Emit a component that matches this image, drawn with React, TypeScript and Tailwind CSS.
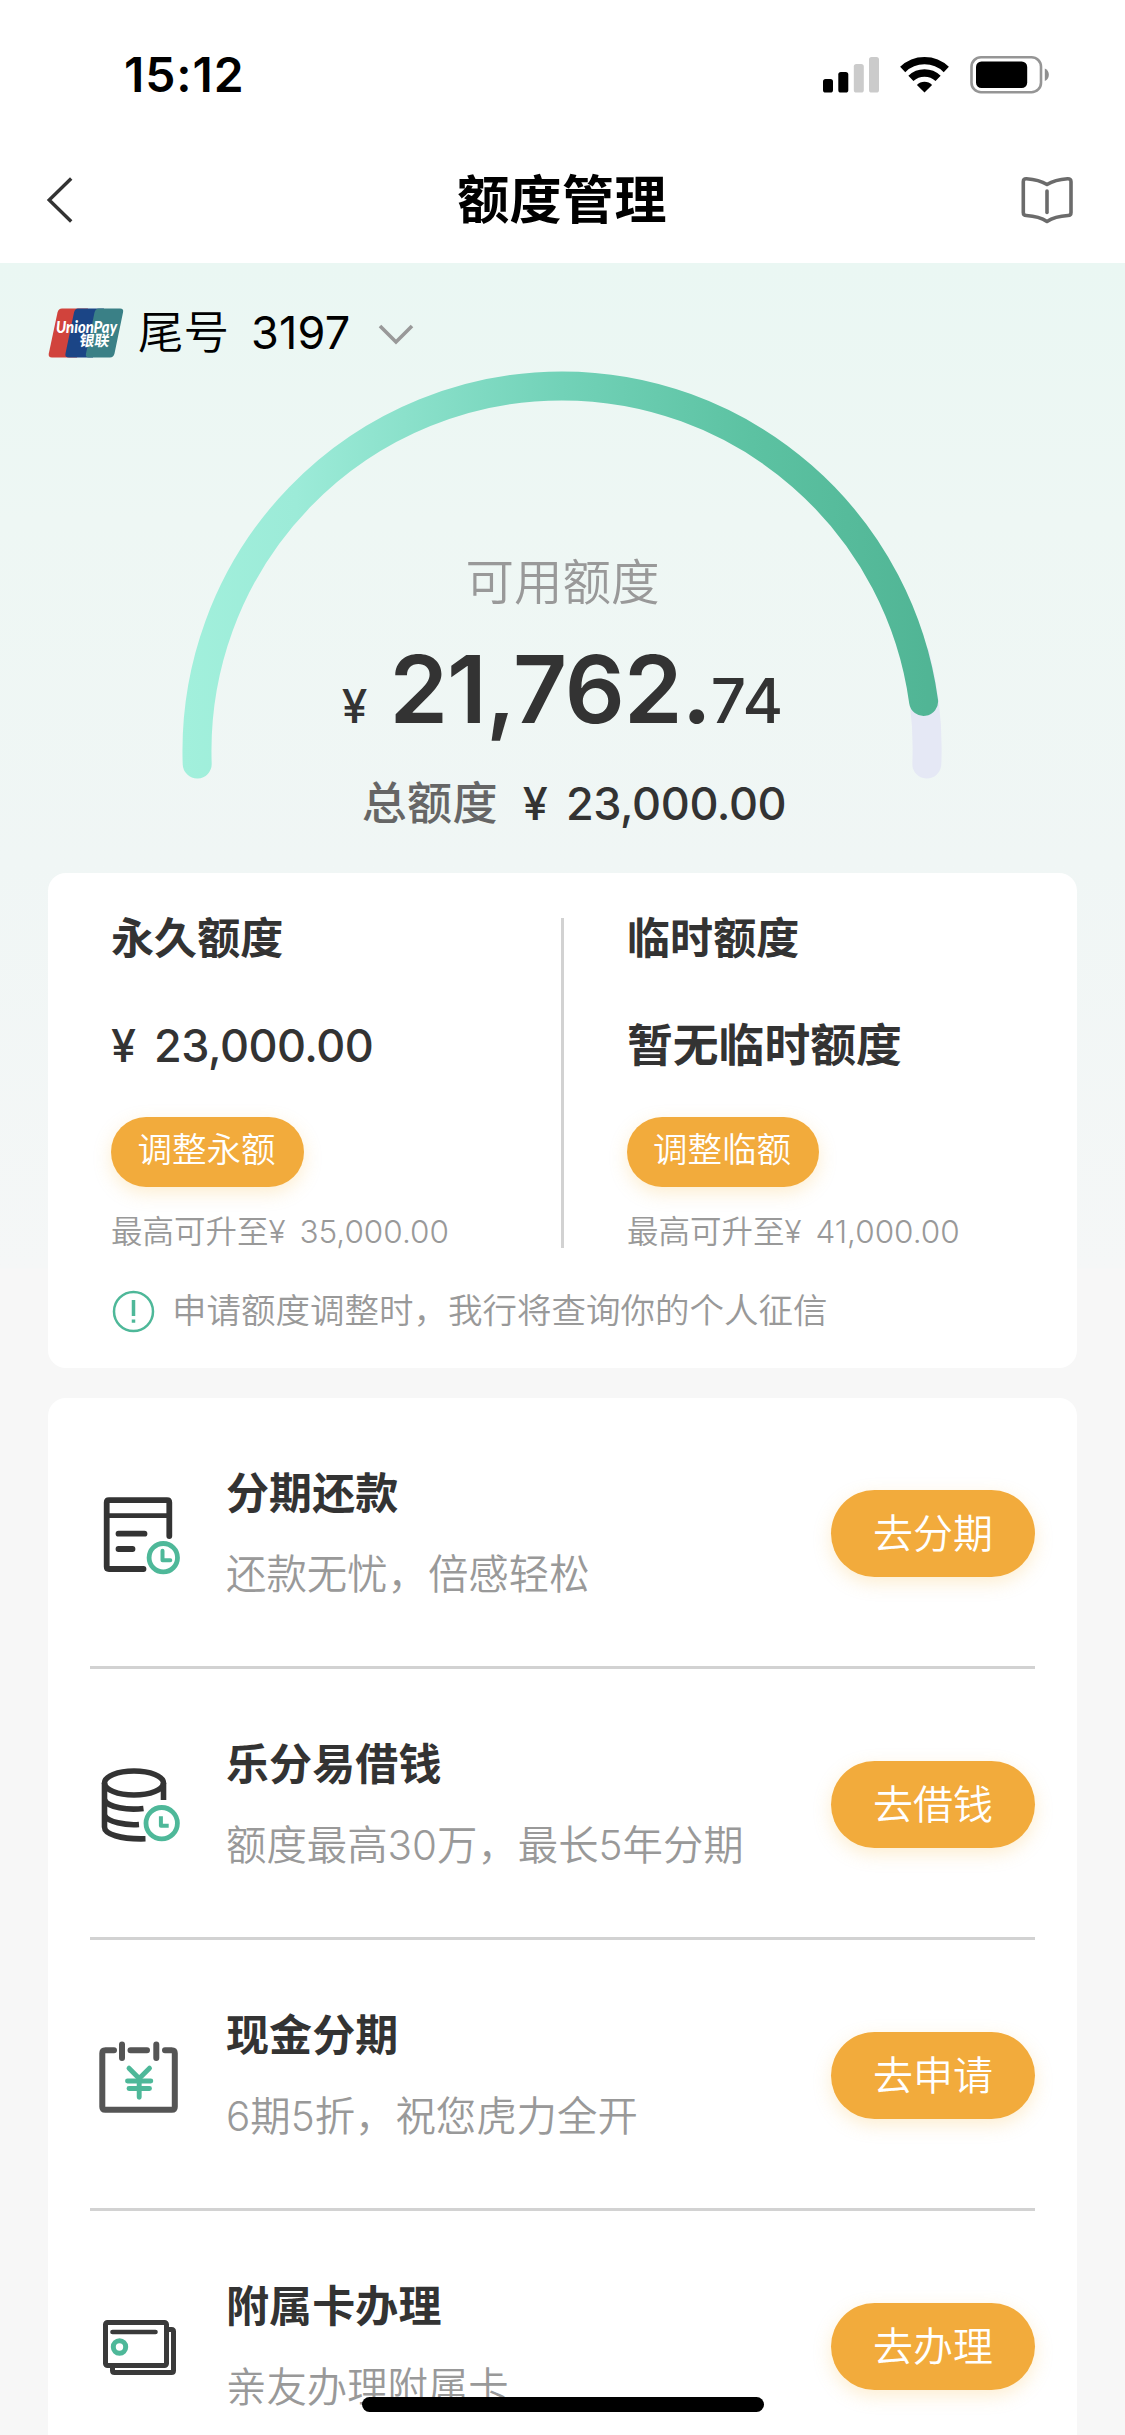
import React from "react";

const latin = "font-['Inter','Noto_Sans_CJK_SC',sans-serif]";

interface LimitProps {
  title: string;
  amount: React.ReactNode;
  action: string;
  max: string;
  btnWidth: string;
}

interface Service {
  icon: React.ReactNode;
  title: string;
  desc: string;
  action: string;
}

function StatusBar() {
  return (
    <div className="flex h-[137px] items-start justify-between pl-[124px] pr-[75px]">
      <div className="pt-[46px] text-[48px] leading-[58px] font-semibold tracking-[0.9px] text-black">
        15:12
      </div>
      <svg className="mt-[54px]" width="228" height="42" viewBox="822 54 228 42">
        <rect x="823" y="79" width="10" height="13.5" rx="2.6" fill="#000" />
        <rect x="838.3" y="72" width="10" height="20.5" rx="2.6" fill="#000" />
        <rect x="853.8" y="64" width="10" height="28.5" rx="2.6" fill="#cbcbcb" />
        <rect x="869" y="57" width="10" height="35.5" rx="2.6" fill="#cbcbcb" />
        {/* wifi */}
        <g fill="none" stroke="#000" strokeWidth="7.4">
          <path d="M902.7 69.5a31.3 31.3 0 0 1 43.600 0" />
          <path d="M910.9 78.4a19.8 19.8 0 0 1 27.200 0" />
        </g>
        <path d="M924.5 92.5l-7.600-7.500a10.800 10.800 0 0 1 15.200 0z" fill="#000" />
        {/* battery */}
        <rect x="971.500" y="57.2" width="69.500" height="35" rx="9.5" fill="none" stroke="#959595" strokeWidth="2.6" />
        <rect x="976" y="61.5" width="51.2" height="26.5" rx="5.5" fill="#000" />
        <path d="M1044.8 68.5c5.4 2 5.4 10.500 0 12.500z" fill="#8f8f8f" />
      </svg>
    </div>
  );
}

function NavBar() {
  return (
    <div className="flex h-[126px] items-center justify-between pl-[46px] pr-[52px]">
      <svg width="52" height="48" viewBox="46 176 52 48" fill="none">
        <path d="M71.200 178.500L49.200 200L71.200 221.500" stroke="#333" strokeWidth="3.4" />
      </svg>
      <h1 className="pt-[1px] pl-[5px] text-[52px] leading-[60px] font-bold tracking-[0.4px] text-black">额度管理</h1>
      <svg width="52" height="48" viewBox="1020.5 176 52 48" fill="none" stroke="#6b6b6b" strokeWidth="3.600" strokeLinecap="round" strokeLinejoin="round">
        <path d="M1046.500 184.500C1041 181 1034 179.200 1026 178.700q-3.200-.2-3.200 3V212.500q0 3 3 3C1034 216 1041 217.800 1046.500 221.500C1052 217.800 1059 216 1067.500 215.500q3 0 3-3V181.700q0-3.200-3.500-3C1059 179.200 1052 181 1046.500 184.500z" />
        <path d="M1046.500 191V212.500" />
      </svg>
    </div>
  );
}

function UnionPay() {
  return (
    <svg className="overflow-visible" width="76" height="50" viewBox="0 0 76 50">
      <path d="M14 .5H40L29 49.500H4Q0 49.500 .8 45.500L9.500 4.500Q10.500 .5 14 .5z" fill="#d1433c" />
      <path d="M30 .5H56L45 49.500H21Q16.500 49.500 17.500 45.500L26 4.500Q27 .5 30 .5z" fill="#1b4586" />
      <path d="M51 .5H72Q76 .5 75 4.500L66.500 45.500Q65.500 49.500 62 49.500H41Q37 49.500 38 45.500L46.500 4.500Q47.500 .5 51 .5z" fill="#3a8086" />
      <text x="8" y="24.500" textLength="61" lengthAdjust="spacingAndGlyphs" fontFamily="Lato, sans-serif" fontSize="16" fontWeight="900" fontStyle="italic" fill="#fff">
        UnionPay
      </text>
      <text x="31" y="38" fontFamily="'Noto Sans CJK SC', sans-serif" fontSize="15" fontWeight="700" fill="#fff" transform="skewX(-8) translate(5 0)">
        银联
      </text>
    </svg>
  );
}

function Gauge() {
  return (
    <svg className="absolute left-[182px] top-[108px]" width="762" height="410" viewBox="182 371 762 410" fill="none" strokeWidth="29" strokeLinecap="round">
      <defs>
        <linearGradient id="used" gradientUnits="userSpaceOnUse" x1="182" y1="0" x2="942" y2="0">
          <stop offset="0" stopColor="#a2f0dc" />
          <stop offset="0.15" stopColor="#9cebd8" />
          <stop offset="0.5" stopColor="#72d2b8" />
          <stop offset="0.75" stopColor="#5cc2a2" />
          <stop offset="1" stopColor="#50b494" />
        </linearGradient>
      </defs>
      <path d="M915 655A365 365 0 0 1 926.800 764" stroke="#e5e8f5" />
      <path d="M197.200 764A365 365 0 0 1 562 386A365 365 0 0 1 923.600 701.500" stroke="url(#used)" />
    </svg>
  );
}

function Limit({ title, amount, action, max, btnWidth }: LimitProps) {
  return (
    <div className="flex flex-1 flex-col items-start">
      <h2 className="text-[43px] leading-[60px] font-bold tracking-[0.1px] text-[#333]">{title}</h2>
      <div className="mt-[48px] h-[60px] text-[45px] leading-[60px] font-medium tracking-[-0.5px] whitespace-pre text-[#333] [word-spacing:7px]">
        {amount}
      </div>
      <button
        className={`mt-[41px] h-[70px] rounded-full bg-[#f2ab3c] pr-[2px] pb-[4px] text-[34.5px] font-[350] text-white shadow-[0_6px_18px_rgba(248,186,70,0.25)] ${btnWidth}`}
      >
        {action}
      </button>
      <p className="mt-[22px] text-[31.5px] leading-[46px] font-[350] whitespace-pre text-[#999] [word-spacing:5px]">
        {max}
      </p>
    </div>
  );
}

function ClockBadge({ cx, cy, r }: { cx: number; cy: number; r: number }) {
  return (
    <g stroke="#4eb899">
      <circle cx={cx} cy={cy} r={r} strokeWidth="4.800" />
      <path d={`M${cx - 0.8} ${cy - 7}V${cy + 2.500}H${cx + 7}`} strokeWidth="4" />
    </g>
  );
}

// every icon sits in the same 84x84 box
const iconProps = {
  width: 84,
  height: 84,
  fill: "none",
  strokeLinejoin: "round" as const,
};

const BillIcon = () => (
  <svg {...iconProps} viewBox="98 1492 84 84" stroke="#333" strokeWidth="5.800" strokeLinecap="round">
    <path d="M143.500 1569H109q-2.300 0-2.300-2.300V1502.500q0-2.300 2.300-2.300H167q2.300 0 2.300 2.300V1536" />
    <path d="M107 1515.700H169" strokeWidth="4.800" />
    <path d="M118.500 1533.700H144.500M118.500 1549H132.500" />
    <ClockBadge cx={163.300} cy={1557.700} r={14.200} />
  </svg>
);

const CoinsIcon = () => (
  <svg {...iconProps} viewBox="98 1763 84 84" stroke="#333" strokeWidth="5.600">
    <ellipse cx="134" cy="1783" rx="29.500" ry="12" />
    <path d="M104.500 1783V1827C104.500 1834 120 1839.500 145.500 1838.800" />
    <path d="M163.500 1783V1800" />
    <path d="M104.500 1800C108 1807.500 128 1810.500 143.500 1808.500" />
    <path d="M104.500 1815.500C108 1822 125 1825.500 139 1824.500" />
    <ClockBadge cx={161.700} cy={1823.200} r={15.700} />
  </svg>
);

const CashIcon = () => (
  <svg {...iconProps} viewBox="98 2034 84 84" stroke="#555" strokeWidth="6" strokeLinecap="round">
    <path d="M114 2050.300H105.500q-3.200 0-3.200 3V2106.700q0 3 3 3H171.800q3 0 3-3V2053.300q0-3-3.200-3H165" />
    <path d="M130.500 2050.300H147M122 2044.500V2058M156.300 2044.500V2058" />
    <g stroke="#4eb899" strokeWidth="4.900">
      <path d="M129 2068.200L139.200 2078.500L149.500 2068.200M139.200 2079V2097.200" />
      <path d="M127.500 2081H150.800M129 2088.500H149.500" />
    </g>
  </svg>
);

const CardsIcon = () => (
  <svg {...iconProps} viewBox="98 2305 84 84" stroke="#3a3a3a" strokeWidth="5" strokeLinecap="round">
    <rect x="105.500" y="2322.500" width="61" height="43" rx="2" />
    <path d="M112.500 2367V2370.500q0 2 2 2H171.500q2 0 2-2V2331.500q0-2-2-2H168" />
    <path d="M112.500 2332H155.500" strokeWidth="4.600" />
    <circle cx="119.500" cy="2347" r="6.200" stroke="#4eb899" strokeWidth="5" />
  </svg>
);

const services: Service[] = [
  { icon: <BillIcon />, title: "分期还款", desc: "还款无忧，倍感轻松", action: "去分期" },
  { icon: <CoinsIcon />, title: "乐分易借钱", desc: "额度最高30万，最长5年分期", action: "去借钱" },
  { icon: <CashIcon />, title: "现金分期", desc: "6期5折，祝您虎力全开", action: "去申请" },
  { icon: <CardsIcon />, title: "附属卡办理", desc: "亲友办理附属卡", action: "去办理" },
];

function ServiceRow({ icon, title, desc, action }: Service) {
  return (
    <li className="flex h-[271px] shrink-0 items-center border-b-[3px] border-[#d2d2d2] pt-[3px] pl-[8px]">
      {icon}
      <div className="ml-[44px] flex-1">
        <h3 className="text-[43px] leading-[62px] font-bold tracking-[0.1px] text-[#333]">{title}</h3>
        <p className="mt-[20px] text-[40.4px] leading-[62px] font-[350] text-[#999]">{desc}</p>
      </div>
      <button className="h-[87px] w-[204px] rounded-full bg-[#f2ab3c] text-[40px] font-[350] text-white shadow-[0_6px_18px_rgba(248,186,70,0.25)]">
        {action}
      </button>
    </li>
  );
}

export default function App() {
  return (
    <div className={`relative flex h-[2435px] w-[1125px] flex-col overflow-hidden bg-[#f7f7f7] ${latin}`}>
      <header className="h-[263px] shrink-0 bg-white">
        <StatusBar />
        <NavBar />
      </header>

      <main className="relative flex flex-1 flex-col bg-[linear-gradient(180deg,#eaf7f3_0,#eef7f4_260px,#f0f6f5_600px,#f5f7f7_1005px,#f7f7f7_1006px)] px-[48px]">
        <Gauge />
        <div className="relative flex h-[140px] items-center pt-[2px]">
          <div className="flex items-center pb-[3px]">
            <UnionPay />
            <span className="ml-[14px] text-[45.5px] leading-[60px] font-[350] text-black">尾号</span>
            <span className="ml-[22px] text-[45px] leading-[60px] font-normal tracking-[0.2px] text-black">3197</span>
            <svg className="mt-[4px] ml-[28px]" width="36" height="22" viewBox="0 0 36 22" fill="none">
              <path d="M2 2L18 18L34 2" stroke="#999" strokeWidth="3.600" />
            </svg>
          </div>
        </div>

        <section className="relative flex h-[470px] flex-col items-center">
          <p className="mt-[145px] text-[48.5px] leading-[70px] font-[350] text-[#999]">可用额度</p>
          <div className="mt-[21px] flex h-[100px] items-baseline leading-[100px] font-medium text-[#333]">
            <span className="mr-[22px] text-[46px]">¥</span>
            <span className="text-[94px] font-[570] tracking-[-0.9px]">21,762.</span>
            <span className="text-[62px]">74</span>
          </div>
          <div className="mt-[35px] ml-[23px] flex items-center gap-[25px] text-[45px] leading-[60px] font-medium">
            <span className="tracking-[0.3px] text-[#666]">总额度</span>
            <span className="tracking-[-0.4px] whitespace-pre text-[#333] [word-spacing:7px]">¥ 23,000.00</span>
          </div>
        </section>

        <section className="relative h-[495px] shrink-0 rounded-[18px] bg-white pt-[35px] pl-[63px]">
          <div className="flex">
            <Limit title="永久额度" amount="¥ 23,000.00" action="调整永额" max="最高可升至¥ 35,000.00" btnWidth="w-[193px]" />
            <div className="mt-[10px] mr-[63px] h-[330px] w-[3px] bg-[#d2d2d2]" />
            <Limit
              title="临时额度"
              amount={<span className="text-[45.8px] font-bold tracking-normal">暂无临时额度</span>}
              action="调整临额"
              max="最高可升至¥ 41,000.00"
              btnWidth="w-[192px]"
            />
          </div>
          <div className="mt-[31px] flex items-center">
            <svg className="ml-[1px]" width="43" height="43" viewBox="0 0 43 43" fill="none" stroke="#4eb899">
              <circle cx="21.500" cy="21.500" r="19.500" strokeWidth="2.500" />
              <path d="M21.500 10V26M21.500 29.500V32.800" strokeWidth="3.500" />
            </svg>
            <span className="ml-[17px] text-[34.5px] leading-[50px] font-[350] text-[#999]">
              申请额度调整时，我行将查询你的个人征信
            </span>
          </div>
        </section>

        <ul className="relative mt-[30px] h-[1100px] shrink-0 rounded-[18px] bg-white px-[42px]">
          {services.map((s) => (
            <ServiceRow key={s.title} {...s} />
          ))}
        </ul>
      </main>

      {/* home indicator */}
      <div className="absolute top-[2397px] left-[362px] h-[15px] w-[402px] rounded-full bg-black" />
    </div>
  );
}
